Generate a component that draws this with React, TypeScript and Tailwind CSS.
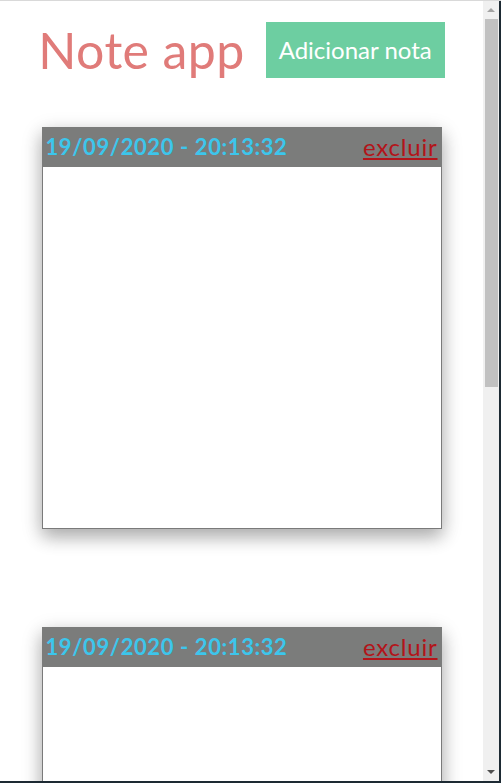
import React from "react";

function Note() {
  return (
    <div className="w-[400px] shadow-[0_8px_16px_0_rgba(0,0,0,0.2),0_6px_20px_0_rgba(0,0,0,0.19)]">
      <div className="flex h-[40px] items-center justify-between bg-[#7b7c7b] px-[4px]">
        <span className="text-[22px] font-bold leading-none tracking-[0.6px] text-[#3cc6ec]">19/09/2020 - 20:13:32</span>
        <a className="text-[24px] leading-none tracking-[0.8px] text-[#b3141a] underline">excluir</a>
      </div>
      <div className="h-[362px] border border-t-0 border-[#7a7a7a] bg-white" />
    </div>
  );
}

export default function App() {
  return (
    <div
      className="flex h-[783px] w-[501px] flex-col overflow-hidden bg-white"
      style={{ fontFamily: "Lato, 'Open Sans', sans-serif" }}
    >
      <div className="h-px w-full bg-[#d9d9d9]" />
      <div className="flex min-h-0 flex-1">
        <div className="min-w-0 flex-1 overflow-hidden">
          <div className="flex items-center justify-center gap-[21px] pt-[21px]">
            <h1 className="text-[50px] font-normal leading-none tracking-[0.4px] text-[#e07b79]">Note app</h1>
            <button className="flex h-[56px] w-[179px] items-center justify-center bg-[#6dcea1] text-[24px] text-white">
              Adicionar nota
            </button>
          </div>
          <div className="flex flex-col items-center gap-[98px] pt-[49px]">
            <Note />
            <Note />
          </div>
        </div>
        <div className="flex w-[16px] flex-col items-center bg-[#f0f0f0]">
          <div className="flex h-[18px] items-center justify-center">
            <div className="h-0 w-0 border-x-[4px] border-b-[4px] border-x-transparent border-b-[#a3a3a3]" />
          </div>
          <div className="h-[368px] w-[13px] bg-[#c1c1c1]" />
          <div className="flex-1" />
          <div className="flex h-[18px] items-center justify-center">
            <div className="h-0 w-0 border-x-[4px] border-t-[4px] border-x-transparent border-t-[#505050]" />
          </div>
        </div>
        <div className="w-[2px] bg-[#1d2a33]" />
      </div>
      <div className="h-[2px] w-full bg-[#1d2a33]" />
    </div>
  );
}
